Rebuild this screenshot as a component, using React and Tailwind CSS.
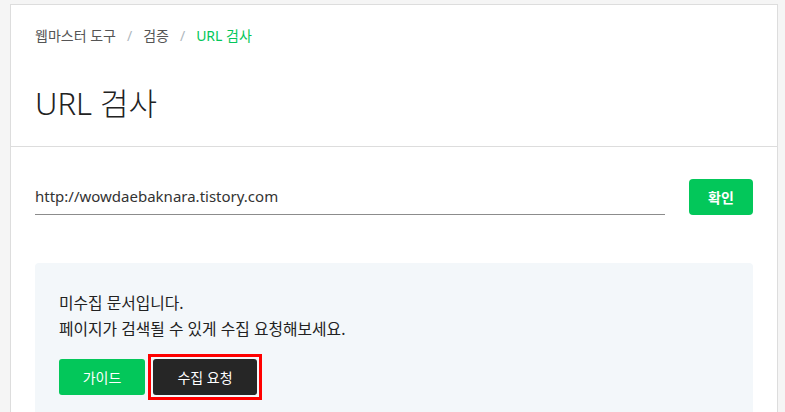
export default function App() {
  return (
    <div
      className="min-h-screen bg-[#f5f5f5] pl-[10px] pr-[7px] pt-[4px]"
      style={{ fontFamily: '"Noto Sans", "Noto Sans CJK KR", sans-serif' }}
    >
      <div className="border border-[#dddddd] bg-white h-[420px] overflow-hidden">
        {/* Header */}
        <div className="px-6 pt-[21px] pb-[23px] border-b border-[#dddddd]">
          <nav className="flex items-center text-[14px] leading-5 text-[#555]">
            <span>웹마스터 도구</span>
            <span className="mx-[11px] text-[#b0b8c0]">/</span>
            <span>검증</span>
            <span className="mx-[11px] text-[#b0b8c0]">/</span>
            <span className="text-[#03c75a]">URL 검사</span>
          </nav>
          <h1 className="mt-[37px] text-[31px] leading-10 font-light text-[#222]">URL 검사</h1>
        </div>

        {/* Body */}
        <div className="px-6 pt-8">
          <div className="flex items-end gap-6">
            <div className="flex-1 h-9 flex items-center border-b border-[#8c8c8c]">
              <span className="text-[15px] text-[#333]">http://wowdaebaknara.tistory.com</span>
            </div>
            <button className="w-16 h-9 rounded-[4px] bg-[#03c75a] text-white text-[14px] font-bold">
              확인
            </button>
          </div>

          <div className="mt-12 rounded-[4px] bg-[#f3f7fa] px-6 pt-[27px] pb-10">
            <p className="text-[15.8px] leading-[26px] text-[#222]">미수집 문서입니다.</p>
            <p className="text-[15.8px] leading-[26px] text-[#222]">페이지가 검색될 수 있게 수집 요청해보세요.</p>
            <div className="mt-[17px] flex gap-2">
              <button className="w-[86px] h-9 rounded-[3px] bg-[#03c75a] text-white text-[14px]">가이드</button>
              <div className="relative">
                <button className="w-[104px] h-9 rounded-[3px] bg-[#262626] text-white text-[14px]">
                  수집 요청
                </button>
                <span className="absolute -inset-[5px] border-[3px] border-[#ff0000] pointer-events-none" />
              </div>
            </div>
          </div>
        </div>
      </div>
    </div>
  )
}
